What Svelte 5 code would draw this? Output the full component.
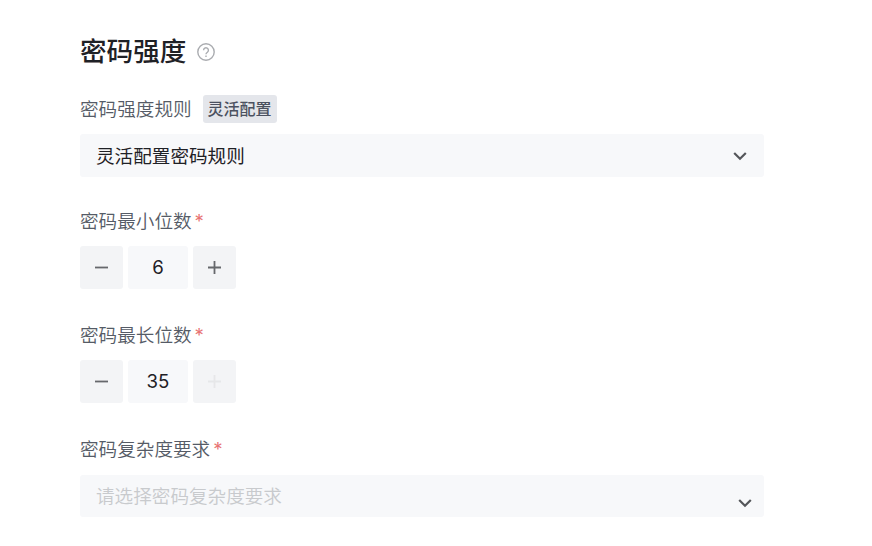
<script>
    let rule = '灵活配置密码规则';
    let placeholder = '请选择密码复杂度要求';
    let max = 35;

    let fields = [
        { label: '密码最小位数', value: 6 },
        { label: '密码最长位数', value: 35 }
    ];

    function step(index, amount) {
        fields[index].value = Math.min(max, Math.max(1, fields[index].value + amount));
    }
</script>

<main class="settings">
    <h2 class="title">
        <span>密码强度</span>
        <svg class="help" viewBox="0 0 18 18">
            <circle cx="9" cy="9" r="8.2" />
            <path d="M6.6 7.2a2.4 2.4 0 1 1 3.8 2C9.4 9.9 9 10.2 9 11.2" />
            <path d="M9 12.6v1.3" />
        </svg>
    </h2>

    <div class="label">
        <span>密码强度规则</span>
        <span class="tag">灵活配置</span>
    </div>
    <div class="select">
        <span>{rule}</span>
        <svg class="arrow" viewBox="0 0 14 10"><path d="M1.2 2l5.8 5.7L12.8 2" /></svg>
    </div>

    {#each fields as field, i}
        <div class="label">
            <span>{field.label}</span>
            <span class="required">*</span>
        </div>
        <div class="stepper">
            <button aria-label="-" on:click={() => step(i, -1)}>
                <svg viewBox="0 0 13 13"><path d="M0 6.5h13" /></svg>
            </button>
            <div class="value">{field.value}</div>
            <button aria-label="+" disabled={field.value >= max} on:click={() => step(i, 1)}>
                <svg viewBox="0 0 13 13"><path d="M0 6.5h13M6.5 0v13" /></svg>
            </button>
        </div>
    {/each}

    <div class="label">
        <span>密码复杂度要求</span>
        <span class="required">*</span>
    </div>
    <div class="select empty">
        <span>{placeholder}</span>
        <svg class="arrow" viewBox="0 0 14 10"><path d="M1.2 2l5.8 5.7L12.8 2" /></svg>
    </div>
</main>

<style>
    :global(body) {
        margin: 0;
        background: #fff;
    }
    .settings {
        box-sizing: border-box;
        width: 764px;
        height: 546px;
        padding: 31px 0 0 80px;
        font-family: "Inter", "Noto Sans CJK SC", sans-serif;
        font-size: 18.6px;
        color: #1f2126;
    }
    .title {
        display: flex;
        align-items: center;
        gap: 11px;
        height: 40px;
        margin: 0 0 18px;
        font-size: 26.6px;
        font-weight: 500;
        line-height: 40px;
    }
    svg {
        fill: none;
        stroke: currentColor;
    }
    .help {
        width: 18px;
        height: 18px;
        margin-top: 2px;
        color: #aaacb0;
        stroke-width: 1.4;
    }
    .label {
        display: flex;
        align-items: center;
        height: 40px;
        margin-bottom: 5px;
        line-height: 40px;
        font-weight: 350;
        color: #555b66;
    }
    .tag {
        width: 74px;
        height: 28px;
        margin-left: 11px;
        border-radius: 3px;
        background: #e4e6eb;
        color: #4b5160;
        font-size: 16px;
        font-weight: 500;
        line-height: 28px;
        text-align: center;
    }
    .required {
        margin-left: 3px;
        color: #e87474;
        font-weight: 400;
    }
    .select {
        box-sizing: border-box;
        display: flex;
        align-items: center;
        justify-content: space-between;
        height: 43px;
        margin-bottom: 24px;
        padding: 0 17px 0 16px;
        border-radius: 3px;
        background: #f7f8fa;
    }
    .select span {
        padding-bottom: 2px;
    }
    .arrow {
        width: 14px;
        height: 10px;
        color: #54565a;
        stroke-width: 2.2;
    }
    .stepper {
        display: flex;
        gap: 5px;
        height: 43px;
        margin-bottom: 26px;
    }
    button {
        display: flex;
        align-items: center;
        justify-content: center;
        width: 43px;
        padding: 0;
        border: 0;
        border-radius: 3px;
        background: #f3f4f6;
        color: #66686c;
    }
    button svg {
        width: 13px;
        height: 13px;
        stroke-width: 1.8;
    }
    button:disabled {
        color: #e6e7e9;
    }
    .value {
        width: 60px;
        border-radius: 3px;
        background: #f7f8fa;
        line-height: 43px;
        text-align: center;
    }
    .empty {
        height: 42px;
        margin-top: 6px;
        margin-bottom: 0;
        padding-right: 12px;
        color: #c8cacd;
        font-weight: 350;
    }
    .empty span {
        padding-bottom: 4px;
    }
    .empty .arrow {
        margin-top: 13px;
    }
</style>
